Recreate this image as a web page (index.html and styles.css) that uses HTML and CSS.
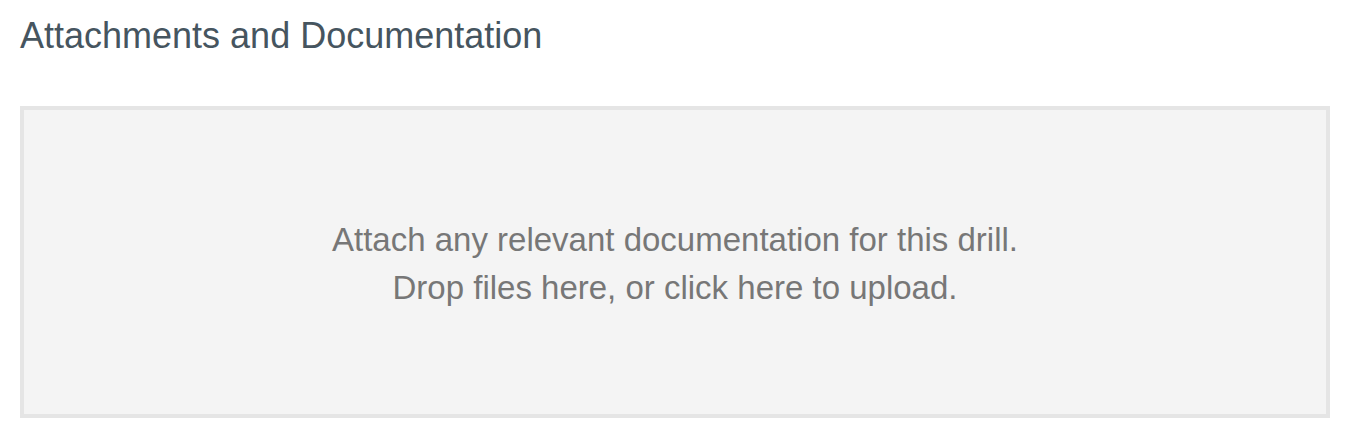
FILE: index.html
```html
<!DOCTYPE html>
<html>
<head>
<meta charset="utf-8">
<link rel="stylesheet" href="styles.css">
</head>
<body>
<section class="attachments">
  <h2 class="title">Attachments and Documentation</h2>
  <div class="dropzone">
    <p class="dz-text">Attach any relevant documentation for this drill.<br>Drop files here, or click here to upload.</p>
  </div>
</section>
</body>
</html>
```

FILE: styles.css
```css
html, body {
  margin: 0;
  padding: 0;
  background: #ffffff;
}
body {
  font-family: "Liberation Sans", Arial, sans-serif;
}
.attachments {
  padding: 14px 20px 0 20px;
}
.title {
  margin: 0;
  font-size: 36px;
  font-weight: normal;
  line-height: 44px;
  color: #46555f;
}
.dropzone {
  margin-top: 48px;
  width: 1310px;
  height: 312px;
  box-sizing: border-box;
  border: 4px solid #e5e5e5;
  background: #f4f4f4;
  display: flex;
  align-items: center;
  justify-content: center;
}
.dz-text {
  margin: 0;
  padding-top: 4px;
  text-align: center;
  font-size: 33px;
  line-height: 48px;
  color: #777777;
}
```
